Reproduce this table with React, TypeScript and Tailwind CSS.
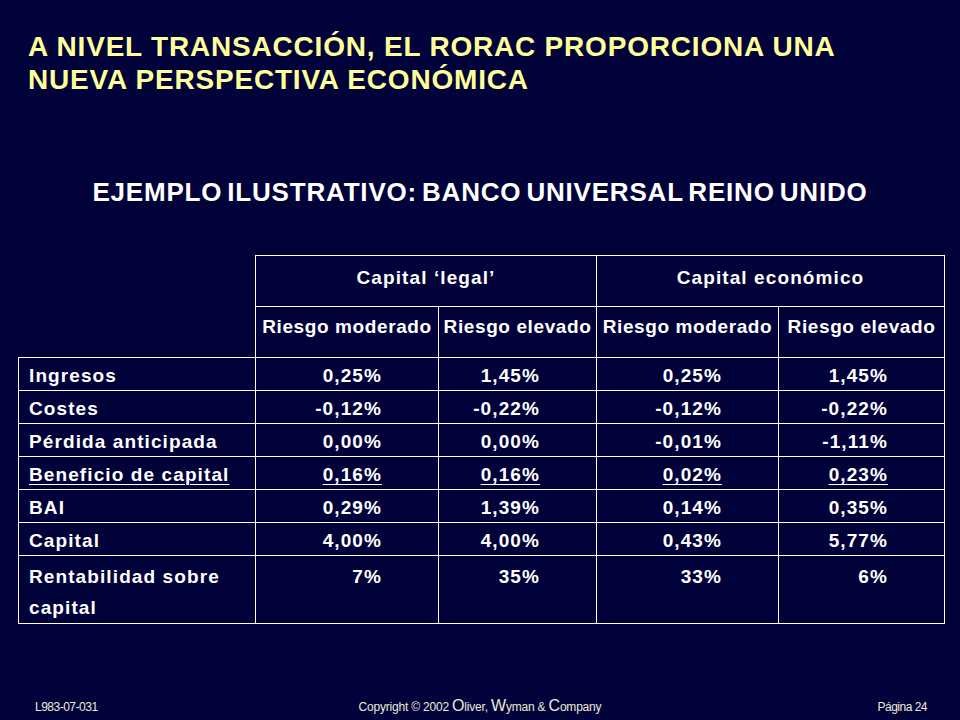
import React from 'react';

type Row = {
  label: string;
  values: string[];
  underline?: boolean;
};

const rows: Row[] = [
  { label: 'Ingresos', values: ['0,25%', '1,45%', '0,25%', '1,45%'] },
  { label: 'Costes', values: ['-0,12%', '-0,22%', '-0,12%', '-0,22%'] },
  { label: 'Pérdida anticipada', values: ['0,00%', '0,00%', '-0,01%', '-1,11%'] },
  { label: 'Beneficio de capital', values: ['0,16%', '0,16%', '0,02%', '0,23%'], underline: true },
  { label: 'BAI', values: ['0,29%', '1,39%', '0,14%', '0,35%'] },
  { label: 'Capital', values: ['4,00%', '4,00%', '0,43%', '5,77%'] },
];

const font = { fontFamily: '"Liberation Sans", Arial, sans-serif' };

export default function App() {
  return (
    <div
      className="h-[720px] w-[960px] bg-[#02023a] flex flex-col overflow-hidden text-white"
      style={font}
    >
      {/* title */}
      <h1 className="pt-[30px] pl-[28px] text-[28px] leading-[33px] font-bold tracking-[0.8px] text-[#ffff99]">
        A NIVEL TRANSACCIÓN, EL RORAC PROPORCIONA UNA
        <br />
        NUEVA PERSPECTIVA ECONÓMICA
      </h1>

      <h2 className="mt-[81px] text-center text-[26px] leading-[30px] font-bold tracking-[0.8px] [word-spacing:-3px]">
        EJEMPLO ILUSTRATIVO: BANCO UNIVERSAL REINO UNIDO
      </h2>

      <div className="mt-[48px] pl-[18px]">
        <table className="border-collapse text-[19px] font-bold tracking-[1.1px]">
          <colgroup>
            <col className="w-[237px]" />
            <col className="w-[183px]" />
            <col className="w-[158px]" />
            <col className="w-[182px]" />
            <col className="w-[166px]" />
          </colgroup>
          <thead>
            <tr className="h-[51px]">
              <th rowSpan={2} className="border-0 p-0"></th>
              <th colSpan={2} className="border border-white align-top pt-[8px] leading-[28px] font-bold">
                Capital ‘legal’
              </th>
              <th colSpan={2} className="border border-white align-top pt-[8px] leading-[28px] font-bold">
                Capital económico
              </th>
            </tr>
            <tr className="h-[51px]">
              {['Riesgo moderado', 'Riesgo elevado', 'Riesgo moderado', 'Riesgo elevado'].map((h, i) => (
                <th
                  key={i}
                  className="border border-white align-top pt-[6px] leading-[28px] font-bold whitespace-nowrap tracking-[0.6px]"
                >
                  {h}
                </th>
              ))}
            </tr>
          </thead>
          <tbody>
            {rows.map((r) => (
              <tr key={r.label} className="h-[33px]">
                <td
                  className={
                    'border border-white pl-[10px] pt-[3px] leading-[29px] whitespace-nowrap ' +
                    (r.underline ? 'underline underline-offset-[3px] decoration-1' : '')
                  }
                >
                  {r.label}
                </td>
                {r.values.map((v, i) => (
                  <td
                    key={i}
                    className={
                      'border border-white text-right pr-[56px] pt-[3px] leading-[29px] ' +
                      (r.underline ? 'underline underline-offset-[3px] decoration-1' : '')
                    }
                  >
                    {v}
                  </td>
                ))}
              </tr>
            ))}
            <tr className="h-[65px]">
              <td className="border border-white pl-[10px] align-top pt-[5px] leading-[31px]">
                Rentabilidad sobre
                <br />
                capital
              </td>
              {['7%', '35%', '33%', '6%'].map((v, i) => (
                <td key={i} className="border border-white text-right pr-[56px] align-top pt-[5px] leading-[31px]">
                  {v}
                </td>
              ))}
            </tr>
          </tbody>
        </table>
      </div>

      {/* footer */}
      <div className="mt-auto grid grid-cols-3 items-end pb-[4px] text-[12px] leading-[18px] text-[#ecebd6]">
        <div className="pl-[35px] tracking-[-0.5px]">L983-07-031</div>
        <div className="text-center whitespace-nowrap tracking-[-0.2px]">
          Copyright © 2002 <span className="text-[16px]">O</span>liver,{' '}
          <span className="text-[16px]">W</span>yman &amp; <span className="text-[16px]">C</span>ompany
        </div>
        <div className="text-right pr-[33px] tracking-[-0.5px]">Página 24</div>
      </div>
    </div>
  );
}
